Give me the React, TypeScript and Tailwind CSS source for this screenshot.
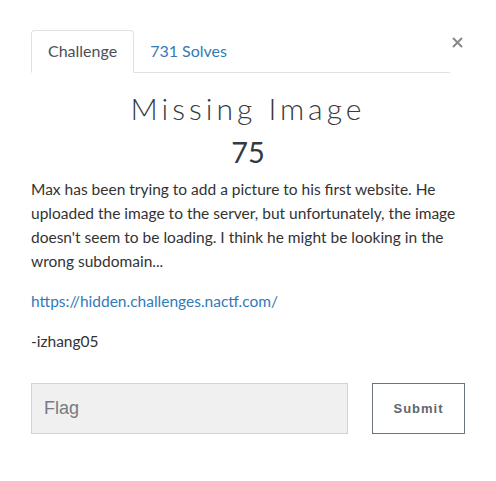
export default function App() {
  return (
    <div className="w-[496px] h-[481px] bg-white px-[31px] pt-[30px] font-['Lato',sans-serif] text-[#212529]">
      {/* Tabs + close */}
      <div className="flex items-start">
        <ul className="flex w-[419px] border-b border-[#dee2e6]">
          <li className="-mb-px rounded-t-[4px] border border-[#dee2e6] border-b-white bg-white px-4 py-2 text-[16px] leading-6 text-[#495057]">
            Challenge
          </li>
          <li className="px-4 py-[9px] text-[16px] leading-6 text-[#337ab7]">731 Solves</li>
        </ul>
        <button className="ml-[2px] mt-[7px] p-0">
          <svg width="11" height="11" viewBox="0 0 11 11" className="block">
            <path d="M1 1 L10 10 M10 1 L1 10" stroke="#888" strokeWidth="2" />
          </svg>
        </button>
      </div>

      {/* Title */}
      <h3 className="mt-[17px] text-center text-[30px] font-light leading-[36px] tracking-[4px] text-[#343a40]">
        Missing Image
      </h3>
      <h4 className="mt-[8px] text-center text-[29px] font-normal leading-[35px] text-[#343a40]">75</h4>

      {/* Description */}
      <div className="mt-[8px] w-[434px] text-[15.5px] leading-6 text-[#333]">
        <p>
          Max has been trying to add a picture to his first website. He uploaded the image to the server, but
          unfortunately, the image doesn't seem to be loading. I think he might be looking in the wrong subdomain...
        </p>
        <p className="mt-4">
          <a className="text-[#337ab7]">https://hidden.challenges.nactf.com/</a>
        </p>
        <p className="mt-4">-izhang05</p>
      </div>

      {/* Flag form */}
      <div className="mt-[30px] flex w-[434px] gap-[24px]">
        <input
          placeholder="Flag"
          className="h-[51px] w-[317px] border border-[#ced4da] bg-[#f0f0f0] px-3 font-['Liberation_Sans',sans-serif] text-[18px] text-[#495057] outline-none placeholder:text-[#757b82]"
        />
        <button className="h-[51px] w-[93px] border border-[#6c757d] bg-white font-['Liberation_Sans',sans-serif] text-[13px] font-bold tracking-[1px] text-[#5f666d]">
          Submit
        </button>
      </div>
    </div>
  )
}
